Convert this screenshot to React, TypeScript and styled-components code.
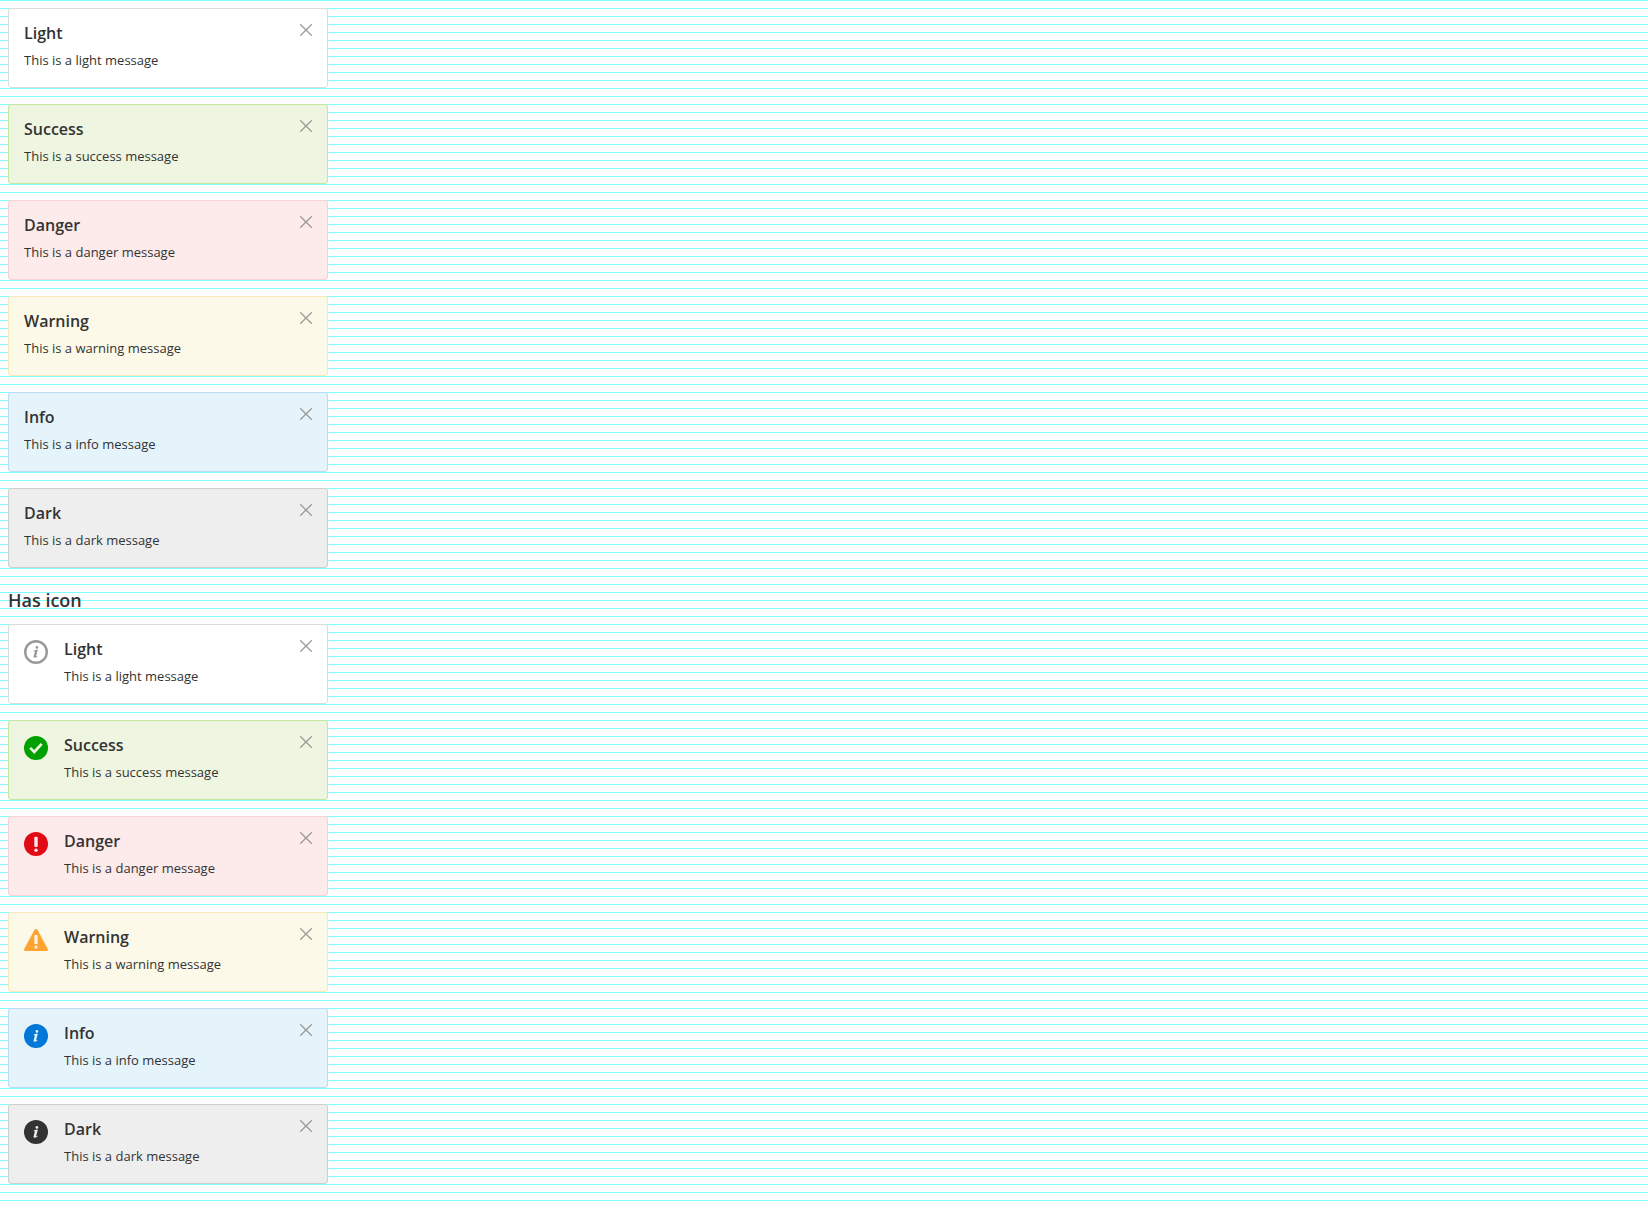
import React from 'react';
import styled, { createGlobalStyle } from 'styled-components';

const GlobalStyle = createGlobalStyle`
  html { background: #fff; }
  body {
    margin: 0;
    font-family: 'Open Sans', 'Noto Sans', sans-serif;
    color: #333;
  }
`;

type Kind = 'light' | 'success' | 'danger' | 'warning' | 'info' | 'dark';

const palette: Record<Kind, { fill: string; border: string; icon: string }> = {
  light: { fill: '#ffffff', border: '#dcdcdc', icon: '#999999' },
  success: { fill: '#eef6e1', border: '#c5e6a0', icon: '#00a000' },
  danger: { fill: '#fdeaea', border: '#fbd0d0', icon: '#e00b14' },
  warning: { fill: '#fdf9e8', border: '#fae7b9', icon: '#ffa433' },
  info: { fill: '#e5f3fb', border: '#b7def5', icon: '#0078d7' },
  dark: { fill: '#eeeeee', border: '#cecece', icon: '#333333' },
};

const Page = styled.main`
  box-sizing: border-box;
  height: 1208px;
  padding: 8px;
  background-image: linear-gradient(#7fffff 1px, transparent 1px);
  background-size: 100% 8px;
`;

const Stack = styled.section`
  display: flex;
  flex-direction: column;
  gap: 16px;
`;

const Heading = styled.h2`
  margin: 16px 0 8px;
  font-size: 18px;
  line-height: 32px;
  font-weight: 600;
`;

const Card = styled.article<{ $kind: Kind }>`
  box-sizing: border-box;
  display: flex;
  align-items: flex-start;
  width: 320px;
  height: 80px;
  padding: 15px;
  border: 1px solid ${(p) => palette[p.$kind].border};
  border-radius: 3px;
  background: ${(p) => palette[p.$kind].fill};
`;

const Body = styled.div`
  flex: 1;
`;

const Title = styled.h3`
  margin: 0 0 6px;
  font-size: 16px;
  line-height: 18px;
  font-weight: 600;
`;

const Text = styled.p`
  margin: 0;
  font-size: 13px;
  line-height: 24px;
`;

const IconBox = styled.svg`
  flex: none;
  width: 24px;
  height: 24px;
  margin-right: 16px;
`;

const Close = styled.button`
  display: flex;
  padding: 0;
  border: 0;
  background: none;
`;

function InfoMark({ color }: { color: string }) {
  return (
    <g fill={color}>
      <circle cx="12.9" cy="7.4" r="1.35" />
      <path d="M9.6 10.9c1-.8 2-1.2 3.6-1.3l.6.3-1.6 5.9c-.1.5.1.6.5.4l.9-.5.2.4c-.9 1-1.9 1.7-3 1.7-1 0-1.4-.6-1.1-1.6l1.1-4.4c.1-.5-.1-.6-.9-.4z" />
    </g>
  );
}

function StatusIcon({ kind }: { kind: Kind }) {
  const { icon, fill } = palette[kind];
  if (kind === 'warning') {
    return (
      <IconBox viewBox="0 0 24 24">
        <path d="M10.4 2a1.9 1.9 0 0 1 3.2 0L23.8 20.9a1.4 1.4 0 0 1-1.2 2.1H1.4A1.4 1.4 0 0 1 .2 20.9z" fill={icon} />
        <rect x="10.4" y="7" width="3.2" height="9" rx="0.8" fill={fill} />
        <circle cx="12" cy="19" r="1.6" fill={fill} />
      </IconBox>
    );
  }
  if (kind === 'light') {
    return (
      <IconBox viewBox="0 0 24 24">
        <circle cx="12" cy="12" r="10.8" fill="none" stroke={icon} strokeWidth="2.4" />
        <InfoMark color={icon} />
      </IconBox>
    );
  }
  return (
    <IconBox viewBox="0 0 24 24">
      <circle cx="12" cy="12" r="12" fill={icon} />
      {kind === 'success' && (
        <path d="M6.2 11.9l4.1 4.1 7.4-8.2" fill="none" stroke={fill} strokeWidth="2.7" />
      )}
      {kind === 'danger' && (
        <>
          <rect x="10.3" y="4.8" width="3.4" height="10.3" rx="1" fill={fill} />
          <circle cx="12" cy="18.2" r="1.7" fill={fill} />
        </>
      )}
      {(kind === 'info' || kind === 'dark') && <InfoMark color={fill} />}
    </IconBox>
  );
}

const messages: { kind: Kind; title: string }[] = [
  { kind: 'light', title: 'Light' },
  { kind: 'success', title: 'Success' },
  { kind: 'danger', title: 'Danger' },
  { kind: 'warning', title: 'Warning' },
  { kind: 'info', title: 'Info' },
  { kind: 'dark', title: 'Dark' },
];

function Messages({ withIcon = false }: { withIcon?: boolean }) {
  return (
    <Stack>
      {messages.map(({ kind, title }) => (
        <Card key={kind} $kind={kind}>
          {withIcon && <StatusIcon kind={kind} />}
          <Body>
            <Title>{title}</Title>
            <Text>This is a {kind} message</Text>
          </Body>
          <Close aria-label="Close">
            <svg width="12" height="12" viewBox="0 0 12 12">
              <path d="M.3.3l11.4 11.4M11.7.3L.3 11.7" stroke="#999" strokeWidth="1.25" fill="none" />
            </svg>
          </Close>
        </Card>
      ))}
    </Stack>
  );
}

export default function App() {
  return (
    <>
      <GlobalStyle />
      <Page>
        <Messages />
        <Heading>Has icon</Heading>
        <Messages withIcon />
      </Page>
    </>
  );
}
